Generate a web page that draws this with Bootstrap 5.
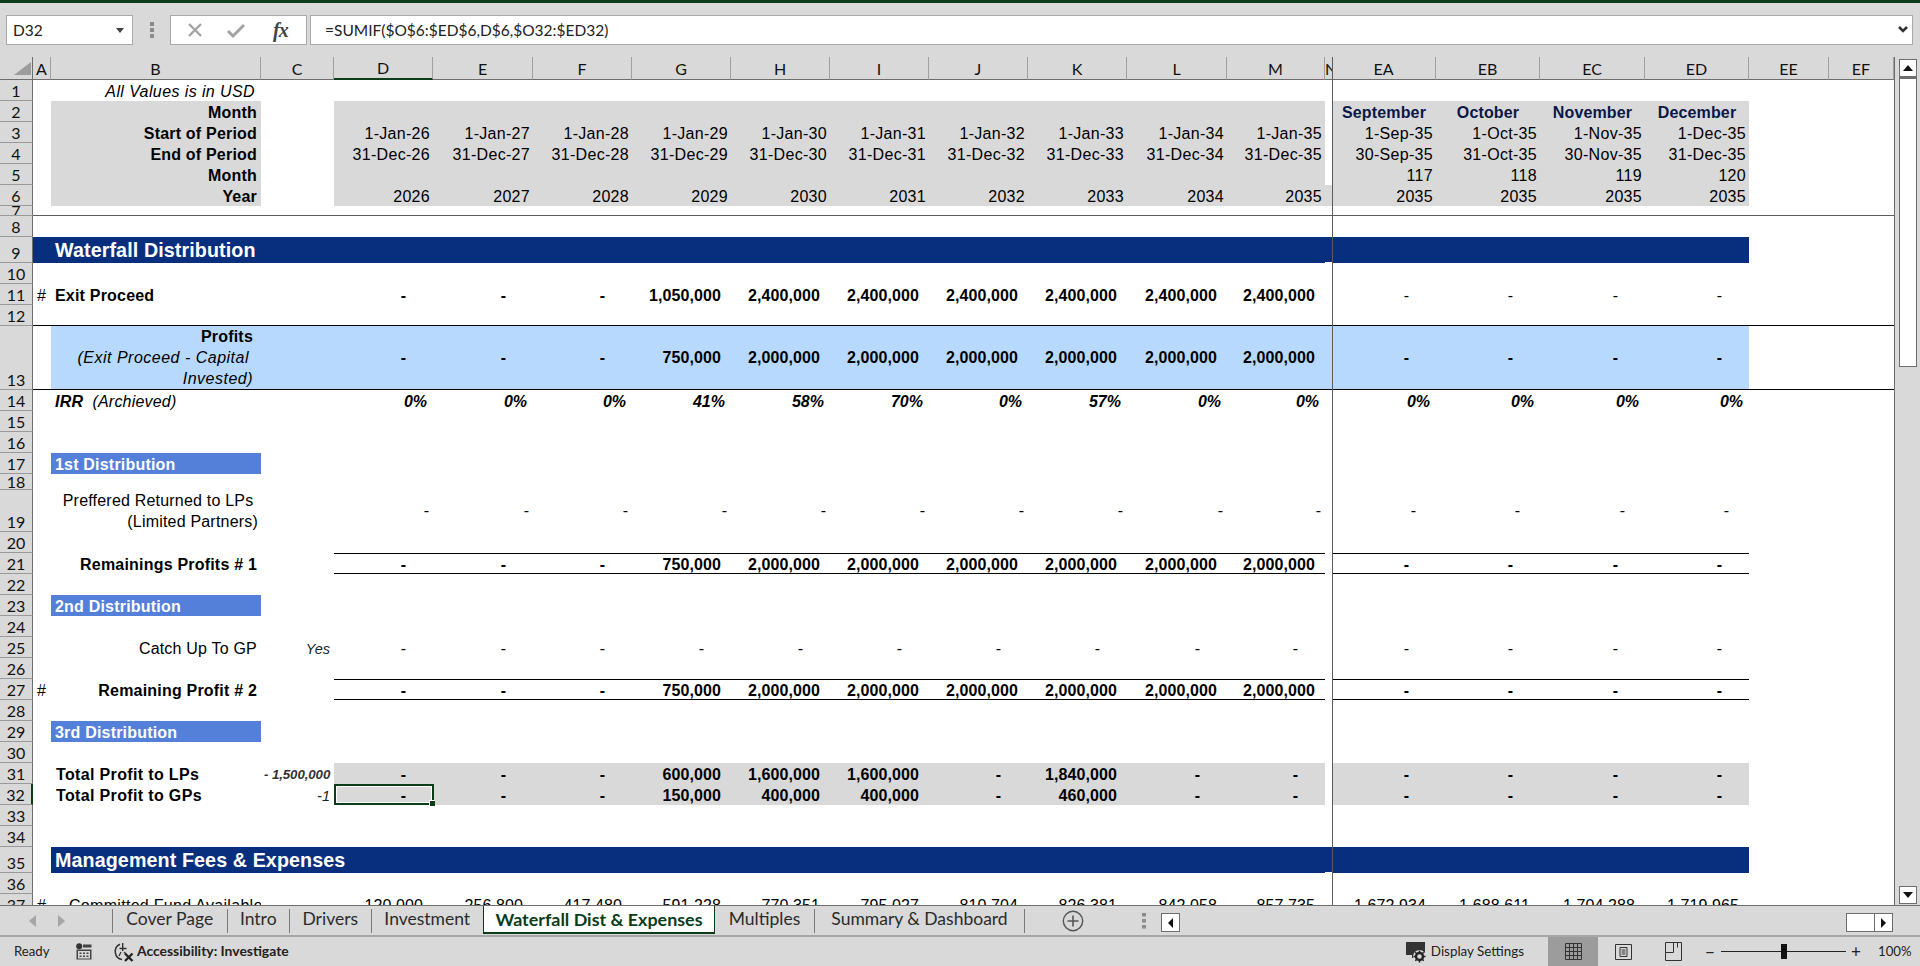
<!doctype html>
<html lang="en"><head><meta charset="utf-8"><title>Waterfall Dist &amp; Expenses</title>
<link href="https://cdn.jsdelivr.net/npm/bootstrap@5.3.0/dist/css/bootstrap.min.css" rel="stylesheet">
<style>
html,body{height:966px;overflow:hidden}
body{background:#d9d9d9;font-family:Lato,"Liberation Sans",sans-serif;color:#222;width:1920px}
.topband{height:3px;background:#0a3d18}
.fbar{height:54px;padding:12px 7px 0 6px}
.fbox{height:30px;background:#fff;border:1px solid #a9a9a9;font-size:15.5px;line-height:28px;color:#222}
.namebox{width:127px;padding-left:6px}
.dots{width:37px;height:30px}
.iconbox{width:137px;margin-right:3px}
.fx{font:italic bold 20px "Liberation Serif",serif;color:#444;margin-left:28px;letter-spacing:-1px}
.formula{padding-left:14px}
.sheetwrap{height:848px}
.sheet{width:1895px;border-right:1px solid #6e6e6e;overflow:hidden;background:#fff}
.freeze{position:absolute;left:1332px;top:0;bottom:0;width:1px;background:#5c5c5c}
.xs{--bs-table-bg:transparent;--bs-table-color:#000;width:1894px;table-layout:fixed;border-collapse:separate;border-spacing:0;margin:0;font:16px/16px "Liberation Sans",Arial,sans-serif}
.xs tr{height:21px}
.xs td,.xs th{padding:0 3px 1px;text-align:right;vertical-align:bottom;white-space:nowrap;overflow:hidden;letter-spacing:.3px;border:0}
.xs thead tr{height:23px}
.xs thead th{height:23px;background:#d9d9d9;border-right:1px solid #a0a0a0;border-bottom:1px solid #6e6e6e;font:16px/20px Lato,sans-serif;text-align:center;padding:2px 0 0;color:#111;letter-spacing:0}
.xs thead th.cor{padding:0;vertical-align:bottom;border-right-color:#6e6e6e}
.xs thead th.sel{border-bottom:2px solid #0a3d18;padding-top:1px}
.xs thead th.nh{text-align:left;border-right:0}
.xs tbody th{background:#d9d9d9;border-right:1px solid #6e6e6e;border-bottom:1px solid #9a9a9a;font:16px/18px Lato,sans-serif;text-align:center;padding:0;letter-spacing:0;color:#111}
.xs tbody th.selr{border-right:2px solid #0a3d18}
.xs .h7{height:10px}.xs .h7 th div{height:9px;line-height:9px;overflow:hidden}
.xs .h18{height:16px}.xs .h18 th{line-height:15px}
.xs .h19{height:42px}.xs .h19 td{padding-bottom:0}
.xs .h9{height:26px}
.xs .h13{height:64px}.xs .h13 td{padding-bottom:0}
.xs .fz td{border-bottom:1px solid #5c5c5c}
.xs .bb td{border-bottom:1px solid #000}
.rg td:nth-child(n+5):nth-child(-n+14),.rg td:nth-child(n+16):nth-child(-n+19){background:#d9d9d9}
.xs .rg6 td:nth-child(15){background:#d9d9d9}
.xs .gl{background:#d9d9d9}
.rb td:nth-child(n+3):nth-child(-n+19){background:#b7d9fd}
.rn td:nth-child(n+2):nth-child(-n+19){background:#082f7e}
.rm td:nth-child(n+3):nth-child(-n+19){background:#082f7e}
.rn td:nth-child(15),.rm td:nth-child(15){box-shadow:inset 0 -1px #fff}
.xs .ttl{font:bold 19.7px/25px "Liberation Sans",sans-serif;color:#fff;text-align:left;padding:1px 0 0 4px;letter-spacing:.1px;overflow:visible}
.xs .sub{background:#5480da;color:#fff;font-weight:700;text-align:left;padding-left:4px;letter-spacing:.2px}
.xs .lb{font-weight:700;padding-right:4px;letter-spacing:.2px}
.xs .ll{font-weight:700;text-align:left;padding-left:4px;letter-spacing:.2px}
.xs .lt{padding-left:5px;letter-spacing:.35px}
.xs .lr{padding-right:6px;letter-spacing:.4px}
.xs .lp{padding-right:3px;letter-spacing:.2px}
.xs .it{font-style:italic}
.xs .v{font-weight:700;padding-right:10px;letter-spacing:.1px}
.xs .d{padding-right:27px;letter-spacing:0}
.xs .db{font-weight:700;padding-right:27px;letter-spacing:0}
.xs .dm{padding-right:4px;vertical-align:middle;letter-spacing:0}
.xs .dn{padding-right:20px;vertical-align:middle;letter-spacing:0}
.xs .mid{vertical-align:middle}
.xs .pc{font-weight:700;font-style:italic;padding-right:6px;letter-spacing:0}
.xs .mon{font-weight:700;text-align:center;color:#0a1748;letter-spacing:.15px}
.rl td:nth-child(n+5):nth-child(-n+14),.rl td:nth-child(n+16):nth-child(-n+19){border-top:1px solid #000;border-bottom:1px solid #000;padding-bottom:0}
.xs .ci{font-size:14.5px;font-style:italic;color:#222;padding-right:4px;letter-spacing:0}
.xs .cb{font-size:13.3px;font-weight:700;letter-spacing:-.1px;color:#333;padding-right:5px}
.xs .pf{display:block;line-height:21px}
.xs .pw{letter-spacing:.5px}
.xs .ind{padding-left:18px;text-align:left}
.xs .cl{text-align:left;padding-left:4px;letter-spacing:0}
.xs .selc{position:relative;overflow:visible}
.cursor{position:absolute;left:0;right:-1px;top:0;bottom:0;border:2px solid #0a3d18;outline:1px solid #fff;outline-offset:-3px}
.grip{position:absolute;right:-3px;bottom:-3px;width:6px;height:6px;background:#0a3d18;border:1px solid #fff;border-width:1px 0 0 1px}
.vscroll{width:25px;padding:2px 3px 1px 4px}
.vbtn{height:18px;background:#fff;border:1px solid #6e6e6e}
.vthumb{height:290px;background:#fff;border:1px solid #6e6e6e;border-top-width:2px}
.tabsbar{height:32px;border-top:1px solid #6e6e6e;border-bottom:2px solid #a6a6a6;font-size:17.5px}
.tabsnav{width:112px;padding-left:29px;gap:22px}
.xtab{padding:0;height:24px;margin-top:3px;line-height:20px;color:#2b2b2b;border-left:1px solid #7a7a7a;text-align:center;white-space:nowrap}
.nav .t1{width:114.5px}.nav .t2{width:62.5px}.nav .t3{width:81.5px}.nav .t4{width:112.5px}
.nav .t5{width:232px;height:28px;margin-top:0;background:#fff;font-weight:700;color:#0a3d18;line-height:26px;border-left:1px solid #0a3d18;border-right:1px solid #0a3d18;border-bottom:2px solid #0a3d18;font-size:17.9px}
.nav .t5.active{color:#0a3d18}
.nav-item:has(.t5)+.nav-item .xtab{border-left:0}
.nav .t6{width:99px}.nav .t7{width:211px;border-right:1px solid #7a7a7a}
.addsheet{margin-left:37px}
.tdots{margin-left:58px;width:19px}
.hbtn{width:19px;height:19px;background:#fff;border:1px solid #6e6e6e;margin-top:7px}
.hfill{width:28px;height:19px;background:#fff;border:1px solid #6e6e6e;border-right:0;margin-top:7px;margin-left:auto}
.hend{margin-right:27px}
.statusb{height:29px;font-size:13.2px;color:#222}
.statusb>*{flex:none}
.st-ready{margin-left:14px;width:62px}
.st-acc{font-weight:700;font-size:13.9px;margin-left:2px}
.st-ai{margin-left:21px}
.st-disp{margin-left:auto;font-size:13.4px;margin-right:24px}
.vact{width:50px;height:29px;background:#9c9c9c}
.vbt{width:50px;height:29px}
.zoomtrack{width:125px;height:1px;background:#222;position:relative;margin:0 4px 0 5px}
.zthumb{position:absolute;left:60px;top:-7px;width:6px;height:15px;background:#111}
.zsign{font-size:17px;line-height:17px;width:12px;text-align:center}
.zs1{margin-left:6px}
.zpct{margin:0 11px 0 16px;font-size:13.2px;width:31px}
</style></head><body class="d-flex flex-column">
<div class="topband"></div>
<div class="fbar d-flex">
  <div class="fbox namebox d-flex justify-content-between align-items-center pe-2">D32<svg width="8" height="5" viewBox="0 0 8 5"><path d="M0 0h8L4 5z" fill="#444"/></svg></div>
  <div class="dots d-flex justify-content-center align-items-center"><svg width="4" height="16" viewBox="0 0 4 16"><path d="M0 0h4v4H0zM0 6h4v4H0zM0 12h4v4H0z" fill="#8c8c8c"/></svg></div>
  <div class="fbox iconbox d-flex align-items-center ps-3"><svg width="16" height="14" viewBox="0 0 16 14"><path d="M2 1l12 12M14 1L2 13" stroke="#a3a3a3" stroke-width="2.4" fill="none"/></svg><svg class="ms-4" width="18" height="15" viewBox="0 0 18 15"><path d="M1 8l5 5L17 2" stroke="#a3a3a3" stroke-width="3" fill="none"/></svg><span class="fx">fx</span></div>
  <div class="fbox formula flex-grow-1 d-flex justify-content-between align-items-center pe-1">=SUMIF($O$6:$ED$6,D$6,$O32:$ED32)<svg width="10" height="8" viewBox="0 0 10 8"><path d="M1 1l4 4 4-4" stroke="#333" stroke-width="2.6" fill="none"/></svg></div>
</div>
<div class="sheetwrap d-flex">
<div class="sheet position-relative">
<table class="table table-borderless xs">
<colgroup><col style="width:33px"><col style="width:18px"><col style="width:210px"><col style="width:73px"><col style="width:99px"><col style="width:100px"><col style="width:99px"><col style="width:99px"><col style="width:99px"><col style="width:99px"><col style="width:99px"><col style="width:99px"><col style="width:100px"><col style="width:98px"><col style="width:7px"><col style="width:104px"><col style="width:104px"><col style="width:105px"><col style="width:104px"><col style="width:80px"><col style="width:65px"></colgroup>
<thead><tr>
<th class="cor"><svg class="d-block" width="33" height="22" viewBox="0 0 33 22"><path d="M14 18L31 5v13z" fill="#9c9c9c"/></svg></th><th>A</th><th>B</th><th>C</th><th class="sel">D</th><th>E</th><th>F</th><th>G</th><th>H</th><th>I</th><th>J</th><th>K</th><th>L</th><th>M</th><th class="nh">N</th><th>EA</th><th>EB</th><th>EC</th><th>ED</th><th>EE</th><th>EF</th>
</tr></thead>
<tbody>
<tr><th>1</th><td></td><td class="it lr">All Values is in USD</td><td colspan="18"></td></tr>
<tr class="rg"><th>2</th><td></td><td class="lb gl">Month</td><td></td><td></td><td></td><td></td><td></td><td></td><td></td><td></td><td></td><td></td><td></td><td></td><td class="mon">September</td><td class="mon">October</td><td class="mon">November</td><td class="mon">December</td><td colspan="2"></td></tr>
<tr class="rg"><th>3</th><td></td><td class="lb gl">Start of Period</td><td></td><td>1-Jan-26</td><td>1-Jan-27</td><td>1-Jan-28</td><td>1-Jan-29</td><td>1-Jan-30</td><td>1-Jan-31</td><td>1-Jan-32</td><td>1-Jan-33</td><td>1-Jan-34</td><td>1-Jan-35</td><td></td><td>1-Sep-35</td><td>1-Oct-35</td><td>1-Nov-35</td><td>1-Dec-35</td><td colspan="2"></td></tr>
<tr class="rg"><th>4</th><td></td><td class="lb gl">End of Period</td><td></td><td>31-Dec-26</td><td>31-Dec-27</td><td>31-Dec-28</td><td>31-Dec-29</td><td>31-Dec-30</td><td>31-Dec-31</td><td>31-Dec-32</td><td>31-Dec-33</td><td>31-Dec-34</td><td>31-Dec-35</td><td></td><td>30-Sep-35</td><td>31-Oct-35</td><td>30-Nov-35</td><td>31-Dec-35</td><td colspan="2"></td></tr>
<tr class="rg"><th>5</th><td></td><td class="lb gl">Month</td><td></td><td></td><td></td><td></td><td></td><td></td><td></td><td></td><td></td><td></td><td></td><td></td><td>117</td><td>118</td><td>119</td><td>120</td><td colspan="2"></td></tr>
<tr class="rg rg6"><th>6</th><td></td><td class="lb gl">Year</td><td></td><td>2026</td><td>2027</td><td>2028</td><td>2029</td><td>2030</td><td>2031</td><td>2032</td><td>2033</td><td>2034</td><td>2035</td><td></td><td>2035</td><td>2035</td><td>2035</td><td>2035</td><td colspan="2"></td></tr>
<tr class="h7 fz"><th><div>7</div></th><td colspan="20"></td></tr>
<tr><th>8</th><td colspan="20"></td></tr>
<tr class="h9 rn"><th>9</th><td></td><td class="ttl">Waterfall Distribution</td><td></td><td></td><td></td><td></td><td></td><td></td><td></td><td></td><td></td><td></td><td></td><td></td><td></td><td></td><td></td><td></td><td></td><td colspan="2"></td></tr>
<tr><th>10</th><td colspan="20"></td></tr>
<tr><th>11</th><td class="cl">#</td><td class="ll">Exit Proceed</td><td></td><td class="db">-</td><td class="db">-</td><td class="db">-</td><td class="v">1,050,000</td><td class="v">2,400,000</td><td class="v">2,400,000</td><td class="v">2,400,000</td><td class="v">2,400,000</td><td class="v">2,400,000</td><td class="v">2,400,000</td><td></td><td class="d">-</td><td class="d">-</td><td class="d">-</td><td class="d">-</td><td colspan="2"></td></tr>
<tr class="bb"><th>12</th><td colspan="20"></td></tr>
<tr class="h13 rb bb"><th>13</th><td></td><td class="lb"><span class="pf fw-bold pe-1">Profits</span><span class="pf it pe-2 fw-normal pw">(Exit Proceed - Capital</span><span class="pf it fw-normal pw pe-1">Invested)</span></td><td></td><td class="db mid">-</td><td class="db mid">-</td><td class="db mid">-</td><td class="v mid">750,000</td><td class="v mid">2,000,000</td><td class="v mid">2,000,000</td><td class="v mid">2,000,000</td><td class="v mid">2,000,000</td><td class="v mid">2,000,000</td><td class="v mid">2,000,000</td><td></td><td class="db mid">-</td><td class="db mid">-</td><td class="db mid">-</td><td class="db mid">-</td><td colspan="2"></td></tr>
<tr><th>14</th><td></td><td class="ll it">IRR <span class="fw-normal">&nbsp;(Archieved)</span></td><td></td><td class="pc">0%</td><td class="pc">0%</td><td class="pc">0%</td><td class="pc">41%</td><td class="pc">58%</td><td class="pc">70%</td><td class="pc">0%</td><td class="pc">57%</td><td class="pc">0%</td><td class="pc">0%</td><td></td><td class="pc">0%</td><td class="pc">0%</td><td class="pc">0%</td><td class="pc">0%</td><td colspan="2"></td></tr>
<tr><th>15</th><td colspan="20"></td></tr>
<tr><th>16</th><td colspan="20"></td></tr>
<tr><th>17</th><td></td><td class="sub">1st Distribution</td><td colspan="18"></td></tr>
<tr class="h18"><th>18</th><td colspan="20"></td></tr>
<tr class="h19"><th>19</th><td></td><td class="lp"><span class="d-block pf">Preffered Returned to LPs&nbsp;</span><span class="d-block pf">(Limited Partners)</span></td><td></td><td class="dm">-</td><td class="dm">-</td><td class="dm">-</td><td class="dm">-</td><td class="dm">-</td><td class="dm">-</td><td class="dm">-</td><td class="dm">-</td><td class="dm">-</td><td class="dm">-</td><td></td><td class="dn">-</td><td class="dn">-</td><td class="dn">-</td><td class="dn">-</td><td colspan="2"></td></tr>
<tr><th>20</th><td colspan="20"></td></tr>
<tr class="rl"><th>21</th><td></td><td class="lb">Remainings Profits # 1</td><td></td><td class="db">-</td><td class="db">-</td><td class="db">-</td><td class="v">750,000</td><td class="v">2,000,000</td><td class="v">2,000,000</td><td class="v">2,000,000</td><td class="v">2,000,000</td><td class="v">2,000,000</td><td class="v">2,000,000</td><td></td><td class="db">-</td><td class="db">-</td><td class="db">-</td><td class="db">-</td><td colspan="2"></td></tr>
<tr><th>22</th><td colspan="20"></td></tr>
<tr><th>23</th><td></td><td class="sub">2nd Distribution</td><td colspan="18"></td></tr>
<tr><th>24</th><td colspan="20"></td></tr>
<tr><th>25</th><td></td><td class="lb fw-normal">Catch Up To GP</td><td class="ci">Yes</td><td class="d">-</td><td class="d">-</td><td class="d">-</td><td class="d">-</td><td class="d">-</td><td class="d">-</td><td class="d">-</td><td class="d">-</td><td class="d">-</td><td class="d">-</td><td></td><td class="d">-</td><td class="d">-</td><td class="d">-</td><td class="d">-</td><td colspan="2"></td></tr>
<tr><th>26</th><td colspan="20"></td></tr>
<tr class="rl"><th>27</th><td class="cl">#</td><td class="lb">Remaining Profit # 2</td><td></td><td class="db">-</td><td class="db">-</td><td class="db">-</td><td class="v">750,000</td><td class="v">2,000,000</td><td class="v">2,000,000</td><td class="v">2,000,000</td><td class="v">2,000,000</td><td class="v">2,000,000</td><td class="v">2,000,000</td><td></td><td class="db">-</td><td class="db">-</td><td class="db">-</td><td class="db">-</td><td colspan="2"></td></tr>
<tr><th>28</th><td colspan="20"></td></tr>
<tr><th>29</th><td></td><td class="sub">3rd Distribution</td><td colspan="18"></td></tr>
<tr><th>30</th><td colspan="20"></td></tr>
<tr class="rg"><th>31</th><td></td><td class="ll lt">Total Profit to LPs</td><td class="ci cb">- 1,500,000</td><td class="db">-</td><td class="db">-</td><td class="db">-</td><td class="v">600,000</td><td class="v">1,600,000</td><td class="v">1,600,000</td><td class="db">-</td><td class="v">1,840,000</td><td class="db">-</td><td class="db">-</td><td></td><td class="db">-</td><td class="db">-</td><td class="db">-</td><td class="db">-</td><td colspan="2"></td></tr>
<tr class="rg"><th class="selr">32</th><td></td><td class="ll lt">Total Profit to GPs</td><td class="ci">-1</td><td class="db selc">-<div class="cursor"><div class="grip"></div></div></td><td class="db">-</td><td class="db">-</td><td class="v">150,000</td><td class="v">400,000</td><td class="v">400,000</td><td class="db">-</td><td class="v">460,000</td><td class="db">-</td><td class="db">-</td><td></td><td class="db">-</td><td class="db">-</td><td class="db">-</td><td class="db">-</td><td colspan="2"></td></tr>
<tr><th>33</th><td colspan="20"></td></tr>
<tr><th>34</th><td colspan="20"></td></tr>
<tr class="h9 rm"><th>35</th><td></td><td class="ttl">Management Fees &amp; Expenses</td><td></td><td></td><td></td><td></td><td></td><td></td><td></td><td></td><td></td><td></td><td></td><td></td><td></td><td></td><td></td><td></td><td></td><td colspan="2"></td></tr>
<tr><th>36</th><td colspan="20"></td></tr>
<tr><th>37</th><td class="cl">#</td><td class="ind">Committed Fund Available</td><td></td><td class="v fw-normal">120,000</td><td class="v fw-normal">256,800</td><td class="v fw-normal">417,480</td><td class="v fw-normal">591,228</td><td class="v fw-normal">770,351</td><td class="v fw-normal">795,027</td><td class="v fw-normal">810,704</td><td class="v fw-normal">826,381</td><td class="v fw-normal">842,058</td><td class="v fw-normal">857,735</td><td></td><td class="v fw-normal">1,672,934</td><td class="v fw-normal">1,688,611</td><td class="v fw-normal">1,704,288</td><td class="v fw-normal">1,719,965</td><td colspan="2"></td></tr>
</tbody></table>
<div class="freeze"></div>
</div>
<div class="vscroll d-flex flex-column">
  <div class="vbtn d-flex justify-content-center align-items-center"><svg width="10" height="6" viewBox="0 0 10 6"><path d="M5 0l5 6H0z" fill="#111"/></svg></div>
  <div class="vthumb"></div>
  <div class="flex-grow-1"></div>
  <div class="vbtn d-flex justify-content-center align-items-center"><svg width="10" height="6" viewBox="0 0 10 6"><path d="M0 0h10L5 6z" fill="#111"/></svg></div>
</div>
</div>
<div class="tabsbar d-flex">
  <div class="tabsnav d-flex align-items-center"><svg width="7" height="12" viewBox="0 0 7 12"><path d="M7 0v12L0 6z" fill="#a6a6a6"/></svg><svg width="7" height="12" viewBox="0 0 7 12"><path d="M0 0v12l7-6z" fill="#a6a6a6"/></svg></div>
  <ul class="nav flex-nowrap">
    <li class="nav-item"><a class="nav-link xtab t1" href="#">Cover Page</a></li>
    <li class="nav-item"><a class="nav-link xtab t2" href="#">Intro</a></li>
    <li class="nav-item"><a class="nav-link xtab t3" href="#">Drivers</a></li>
    <li class="nav-item"><a class="nav-link xtab t4" href="#">Investment</a></li>
    <li class="nav-item"><a class="nav-link xtab t5 active" href="#">Waterfall Dist &amp; Expenses</a></li>
    <li class="nav-item"><a class="nav-link xtab t6" href="#">Multiples</a></li>
    <li class="nav-item"><a class="nav-link xtab t7" href="#">Summary &amp; Dashboard</a></li>
  </ul>
  <svg class="addsheet align-self-center" width="22" height="22" viewBox="0 0 22 22"><circle cx="11" cy="11" r="9.7" fill="none" stroke="#555" stroke-width="1.4"/><path d="M11 5.5v11M5.5 11h11" stroke="#555" stroke-width="1.6"/></svg>
  <div class="tdots d-flex align-items-center"><svg width="4" height="16" viewBox="0 0 4 16"><path d="M0 0h4v3.5H0zM0 6h4v3.5H0zM0 12h4v3.5H0z" fill="#8c8c8c"/></svg></div>
  <div class="hbtn d-flex justify-content-center align-items-center"><svg width="5" height="10" viewBox="0 0 5 10"><path d="M5 0v10L0 5z" fill="#111"/></svg></div>
  <div class="hfill"></div>
  <div class="hbtn hend d-flex justify-content-center align-items-center"><svg width="5" height="10" viewBox="0 0 5 10"><path d="M0 0v10l5-5z" fill="#111"/></svg></div>
</div>
<div class="statusb d-flex align-items-center">
  <span class="st-ready">Ready</span>
  <svg width="16" height="17" viewBox="0 0 16 17"><circle cx="3.2" cy="3.2" r="3" fill="#333"/><path d="M7 1.5h8.5v3H7zM.5 6.5h15v10H.5z" fill="#444"/><path d="M2 8h12v7.5H2z" fill="#d9d9d9"/><path d="M3.5 9.5h2v1.5h-2zM7 9.5h2v1.5H7zM10.5 9.5h2v1.5h-2zM3.5 12.5h2V14h-2zM7 12.5h2V14H7zM10.5 12.5h2V14h-2z" fill="#444"/></svg>
  <svg class="st-ai" width="22" height="20" viewBox="0 0 22 20"><path d="M7 2.3A8 8 0 0 0 9 17.5" fill="none" stroke="#333" stroke-width="1.5"/><path d="M9.7 1v8M6.5 6.5h7" stroke="#333" stroke-width="1.4" fill="none"/><path d="M8 10l-2 4M11 10l2 2" stroke="#333" stroke-width="1.3" fill="none"/><path d="M12 11.5l7.5 7.5M19.5 11.5L12 19" stroke="#222" stroke-width="2.3" fill="none"/></svg>
  <span class="st-acc">Accessibility: Investigate</span>
  <span class="st-disp d-flex align-items-center gap-1"><svg width="21" height="22" viewBox="0 0 21 22"><path d="M0 1h19v13H8v3H6v-3H0z" fill="#333"/><circle cx="13.5" cy="15.5" r="6.5" fill="#d9d9d9"/><circle cx="13.5" cy="15.5" r="3.5" fill="none" stroke="#222" stroke-width="2.4"/><path d="M13.5 9.5v12M7.5 15.5h12M9.3 11.3l8.4 8.4M17.7 11.3l-8.4 8.4" stroke="#222" stroke-width="1.5" stroke-dasharray="2 8"/></svg>Display Settings</span>
  <div class="vact d-flex justify-content-center align-items-center"><svg width="17" height="17" viewBox="0 0 17 17"><path d="M.5.5h16v16H.5zM.5 4.5h16M.5 8.5h16M.5 12.5h16M4.5.5v16M8.5.5v16M12.5.5v16" fill="none" stroke="#333"/></svg></div>
  <div class="vbt d-flex justify-content-center align-items-center"><svg width="17" height="16" viewBox="0 0 17 16"><path d="M.5.5h16v15H.5zM5 3.5h7v9H5zM6.5 6h4M6.5 8h4M6.5 10h4" fill="none" stroke="#333"/></svg></div>
  <div class="vbt d-flex justify-content-center align-items-center"><svg width="17" height="19" viewBox="0 0 17 19"><path d="M.5.5h16v18H.5zM.5 10.5h8M8.5.5v10M12.5.5v5" fill="none" stroke="#333"/></svg></div>
  <span class="zsign zs1">&minus;</span>
  <div class="zoomtrack"><div class="zthumb"></div></div>
  <span class="zsign">+</span>
  <span class="zpct">100%</span>
</div>
<script src="https://cdn.jsdelivr.net/npm/bootstrap@5.3.0/dist/js/bootstrap.bundle.min.js"></script>
</body></html>
